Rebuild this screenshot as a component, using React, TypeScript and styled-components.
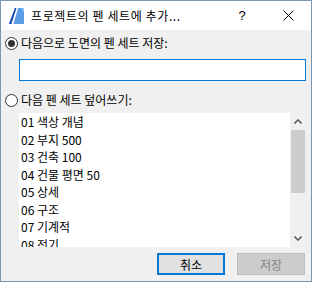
import styled, { createGlobalStyle } from 'styled-components';

const PEN_SETS = [
  '01 색상 개념',
  '02 부지 500',
  '03 건축 100',
  '04 건물 평면 50',
  '05 상세',
  '06 구조',
  '07 기계적',
  '08 전기',
];

const GlobalStyle = createGlobalStyle`
  html, body {
    margin: 0;
    padding: 0;
    background: #ffffff;
  }
  body {
    font-family: "Noto Sans CJK KR", "Liberation Sans", sans-serif;
    font-size: 12px;
    color: #000000;
  }
`;

// blue slanted logo drawn with flat fills
function AppIcon() {
  return (
    <svg width="15" height="16" viewBox="0 0 15 16">
      <polygon points="0,16 6,0 15,0 15,16" fill="#3f86dc" />
      <polygon points="9,0 15,0 15,7" fill="#8fc3f2" />
      <polygon points="4.4,16 9.2,0 12,0 15,4 15,16" fill="#5a9be6" />
      <polygon points="0,16 6,0 7.6,0 2.4,16" fill="#1a4aa8" />
      <polygon points="2.4,16 7.6,0 9.2,0 4.4,16" fill="#ffffff" />
    </svg>
  );
}

function Chevron({ up }: { up?: boolean }) {
  return (
    <svg width="8" height="5" viewBox="0 0 8 5">
      <polyline
        points={up ? '0.5,4.5 4,1 7.5,4.5' : '0.5,0.5 4,4 7.5,0.5'}
        fill="none"
        stroke="#606060"
        strokeWidth="1.6"
      />
    </svg>
  );
}

interface radioProps {
  checked?: boolean;
  label: string;
}

function Radio({ checked, label }: radioProps) {
  return (
    <RadioRow>
      <RadioCircle>{checked && <RadioDot />}</RadioCircle>
      <RadioLabel>{label}</RadioLabel>
    </RadioRow>
  );
}

function App() {
  return (
    <>
      <GlobalStyle />
      <Window>
        <TitleBar>
          <IconBox>
            <AppIcon />
          </IconBox>
          <Title>프로젝트의 펜 세트에 추가...</Title>
          <TitleButton>?</TitleButton>
          <TitleButton>
            <svg width="11" height="11" viewBox="0 0 11 11">
              <path d="M0.5 0.5 L10.5 10.5 M10.5 0.5 L0.5 10.5" stroke="#000" strokeWidth="1" />
            </svg>
          </TitleButton>
        </TitleBar>
        <Body>
          <Radio checked label="다음으로 도면의 펜 세트 저장:" />
          <NameInput />
          <SecondRadio>
            <Radio label="다음 펜 세트 덮어쓰기:" />
          </SecondRadio>
          <ListBox>
            <Items>
              {PEN_SETS.map((name) => (
                <Item key={name}>{name}</Item>
              ))}
            </Items>
            <ScrollBar>
              <ArrowButton>
                <Chevron up />
              </ArrowButton>
              <Track>
                <Thumb />
              </Track>
              <ArrowButton>
                <Chevron />
              </ArrowButton>
            </ScrollBar>
          </ListBox>
          <ButtonRow>
            <DialogButton isDefault>취소</DialogButton>
            <DialogButton disabled>저장</DialogButton>
          </ButtonRow>
        </Body>
      </Window>
    </>
  );
}

const Window = styled.div`
  width: 312px;
  height: 282px;
  box-sizing: border-box;
  border: 1px solid #7d95b3;
  display: flex;
  flex-direction: column;
  overflow: hidden;
`;

const TitleBar = styled.div`
  height: 29px;
  background: #ffffff;
  display: flex;
  align-items: center;
`;

const IconBox = styled.div`
  margin-left: 8px;
  width: 15px;
  height: 16px;
  display: flex;
`;

const Title = styled.div`
  margin-left: 7px;
  flex: 1;
  font-size: 12px;
  line-height: 16px;
  letter-spacing: 0.6px;
  white-space: nowrap;
`;

const TitleButton = styled.div`
  width: 46px;
  height: 29px;
  display: flex;
  align-items: center;
  justify-content: center;
  font-family: "Liberation Sans", sans-serif;
  font-size: 13px;
`;

const Body = styled.div`
  flex: 1;
  background: #f0f0f0;
  padding: 5px 5px 6px 4px;
  display: flex;
  flex-direction: column;
`;

const RadioRow = styled.div`
  height: 16px;
  display: flex;
  align-items: center;
`;

const RadioCircle = styled.div`
  width: 13px;
  height: 13px;
  box-sizing: border-box;
  border: 1px solid #333333;
  border-radius: 50%;
  background: #ffffff;
  display: flex;
  align-items: center;
  justify-content: center;
`;

const RadioDot = styled.div`
  width: 7px;
  height: 7px;
  border-radius: 50%;
  background: #333333;
`;

const RadioLabel = styled.span`
  margin-left: 3px;
  line-height: 16px;
  white-space: nowrap;
`;

const NameInput = styled.div`
  margin: 8px 0 0 14px;
  height: 22px;
  box-sizing: border-box;
  border: 1px solid #0078d7;
  background: #ffffff;
`;

const SecondRadio = styled.div`
  margin-top: 11px;
`;

const ListBox = styled.div`
  margin: 5px 0 0 14px;
  height: 134px;
  display: flex;
`;

const Items = styled.div`
  flex: 1;
  background: #ffffff;
  overflow: hidden;
  padding: 0 0 0 2px;
`;

const Item = styled.div`
  height: 17.5px;
  line-height: 17.5px;
  white-space: nowrap;
`;

const ScrollBar = styled.div`
  width: 16px;
  background: #f0f0f0;
  display: flex;
  flex-direction: column;
`;

const ArrowButton = styled.div`
  height: 17px;
  display: flex;
  align-items: center;
  justify-content: center;
`;

const Track = styled.div`
  flex: 1;
  padding: 0 1px;
`;

const Thumb = styled.div`
  height: 63px;
  background: #cdcdcd;
`;

const ButtonRow = styled.div`
  margin-top: 6px;
  padding-right: 1px;
  display: flex;
  justify-content: flex-end;
  gap: 12px;
`;

const DialogButton = styled.div<{ isDefault?: boolean; disabled?: boolean }>`
  width: 68px;
  height: 22px;
  box-sizing: border-box;
  display: flex;
  align-items: center;
  justify-content: center;
  border: ${(props) =>
    props.isDefault ? '2px solid #0078d7' : '1px solid #bfbfbf'};
  background: ${(props) => (props.disabled ? '#cccccc' : '#e1e1e1')};
  color: ${(props) => (props.disabled ? '#838383' : '#000000')};
`;

export default App;
